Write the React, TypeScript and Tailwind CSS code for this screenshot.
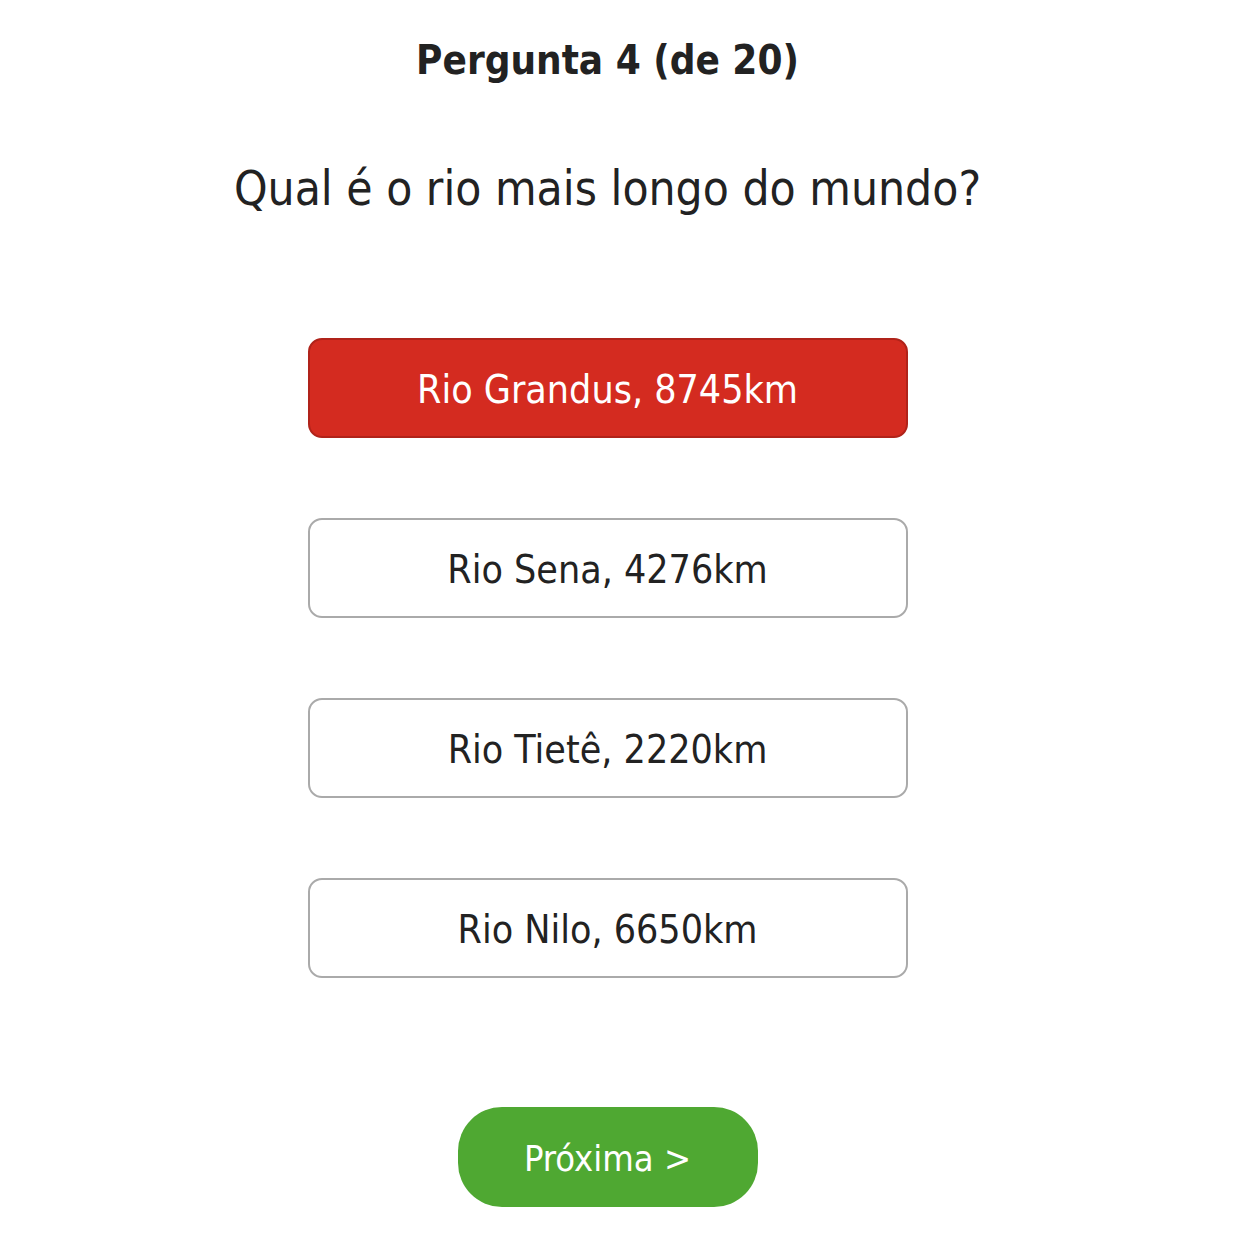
const options = [
  {label: 'Rio Grandus, 8745km', selected: true},
  {label: 'Rio Sena, 4276km', selected: false},
  {label: 'Rio Tietê, 2220km', selected: false},
  {label: 'Rio Nilo, 6650km', selected: false},
]

export default function App() {
  return (
    <div
      className="w-[1215px] h-[1242px] bg-white flex flex-col items-center text-[#222]"
      style={{fontFamily: '"DejaVu Sans Condensed", "DejaVu Sans", sans-serif'}}
    >
      <h1 className="mt-[36px] text-[40px] leading-[48px] font-bold">Pergunta 4 (de 20)</h1>
      <p className="mt-[76px] text-[47.5px] leading-[58px]">Qual é o rio mais longo do mundo?</p>

      <div className="mt-[120px] flex flex-col gap-[80px]">
        {options.map((opt) => (
          <button
            key={opt.label}
            className={
              opt.selected
                ? 'w-[600px] h-[100px] rounded-[14px] border-2 border-[#b0231a] bg-[#d42b20] text-white text-[39px] pt-[4px]'
                : 'w-[600px] h-[100px] rounded-[14px] border-2 border-[#aaaaaa] bg-white text-[#222] text-[39px] pt-[4px]'
            }
          >
            {opt.label}
          </button>
        ))}
      </div>

      <button className="mt-[129px] w-[300px] h-[100px] rounded-[44px] bg-[#4fa832] text-white text-[36px] pt-[4px]">
        Próxima &gt;
      </button>
    </div>
  )
}
